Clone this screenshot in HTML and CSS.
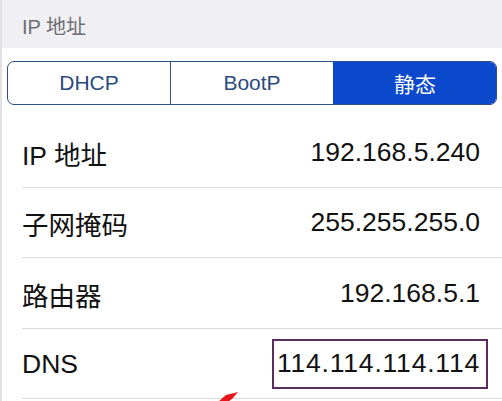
FILE: index.html
```html
<!DOCTYPE html>
<html lang="zh-CN">
<head>
    <meta charset="UTF-8">
    <meta name="viewport" content="width=device-width, initial-scale=1.0">
    <title>IP 地址</title>
    <link rel="stylesheet" href="styles.css">
</head>
<body>
    <div class="page">
        <div class="section-header">IP 地址</div>

        <div class="segmented">
            <div class="segment">DHCP</div>
            <div class="segment">BootP</div>
            <div class="segment active">静态</div>
        </div>

        <div class="list">
            <div class="row">
                <span class="label">IP 地址</span>
                <span class="value">192.168.5.240</span>
            </div>
            <div class="row">
                <span class="label">子网掩码</span>
                <span class="value">255.255.255.0</span>
            </div>
            <div class="row">
                <span class="label">路由器</span>
                <span class="value">192.168.5.1</span>
            </div>
            <div class="row">
                <span class="label">DNS</span>
                <span class="value boxed">114.114.114.114</span>
            </div>
        </div>

        <svg class="arrow" width="30" height="10" viewBox="0 0 30 10">
            <polygon points="2,10 10,3 22,0 17,6 12,10" fill="#e8161a"/>
        </svg>
    </div>
</body>
</html>
```

FILE: styles.css
```css
body {
    margin: 0;
    background: #fff;
    font-family: 'Liberation Sans', 'Noto Sans CJK SC', Arial, sans-serif;
}

.page {
    position: relative;
    width: 502px;
    height: 401px;
    overflow: hidden;
    border-left: 2px solid #e2e2e6;
    box-sizing: border-box;
}

.section-header {
    height: 48px;
    background: #efeff4;
    color: #6d6d72;
    font-size: 20px;
    padding-left: 20px;
    display: flex;
    align-items: center;
    padding-top: 2px;
    box-sizing: border-box;
}

.segmented {
    margin: 13px 5px 0 5px;
    height: 44px;
    border: 1.5px solid #2e4f87;
    border-radius: 7px;
    display: grid;
    grid-template-columns: 162px 163px 1fr;
    overflow: hidden;
    box-sizing: border-box;
}

.segment {
    display: flex;
    align-items: center;
    justify-content: center;
    font-size: 21px;
    color: #2b4a7e;
}

.segment + .segment {
    border-left: 1.5px solid #2e4f87;
}

.segment.active {
    background: #0a49cc;
    border-left-color: #0a49cc;
    color: #fff;
}

.list {
    margin-top: 13px;
    padding-left: 20px;
}

.row {
    height: 69px;
    border-bottom: 1px solid #d9d9dc;
    display: flex;
    align-items: center;
    justify-content: space-between;
    padding-right: 22px;
    font-size: 26.5px;
    color: #111;
}

.row:nth-child(3) {
    height: 70px;
}

.label {
    padding-top: 2px;
}

.value.boxed {
    height: 50px;
    display: flex;
    align-items: center;
    border: 2px solid #5b2c5e;
    padding: 0 6px 0 3px;
    margin-right: -8px;
    letter-spacing: 0.8px;
    box-sizing: border-box;
}

.arrow {
    position: absolute;
    left: 214px;
    top: 392px;
}
```
